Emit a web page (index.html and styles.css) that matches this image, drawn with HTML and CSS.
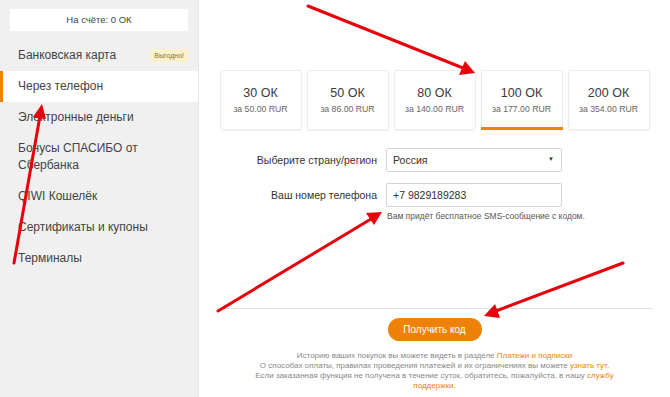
FILE: index.html
```html
<!doctype html>
<html lang="ru">
<head>
	<meta charset="UTF-8">
	<title>Покупка ОК через телефон</title>
	<link rel="stylesheet" href="styles.css">
</head>
<body>
<div class="page">
	<div class="side">
		<div class="balance">На счёте: 0 ОК</div>
		<ul class="menu">
			<li class="item">Банковская карта <span class="badge">Выгодно!</span></li>
			<li class="item active">Через телефон</li>
			<li class="item">Электронные деньги</li>
			<li class="item">Бонусы СПАСИБО от Сбербанка</li>
			<li class="item">QIWI Кошелёк</li>
			<li class="item">Сертификаты и купоны</li>
			<li class="item">Терминалы</li>
		</ul>
	</div>

	<div class="main">
		<div class="cards">
			<div class="card"><div class="amount">30 ОК</div><div class="price">за 50.00 RUR</div></div>
			<div class="card"><div class="amount">50 ОК</div><div class="price">за 86.00 RUR</div></div>
			<div class="card"><div class="amount">80 ОК</div><div class="price">за 140.00 RUR</div></div>
			<div class="card selected"><div class="amount">100 ОК</div><div class="price">за 177.00 RUR</div></div>
			<div class="card"><div class="amount">200 ОК</div><div class="price">за 354.00 RUR</div></div>
		</div>

		<form class="form">
			<div class="row">
				<label for="country">Выберите страну/регион</label>
				<div class="select">
					<select id="country" name="country">
						<option>Россия</option>
					</select>
				</div>
			</div>
			<div class="row">
				<label for="phone">Ваш номер телефона</label>
				<input type="text" id="phone" name="phone" value="+7 9829189283">
			</div>
			<div class="hint">Вам придёт бесплатное SMS-сообщение с кодом.</div>
		</form>

		<div class="divider"></div>

		<div class="submit">
			<button type="button" class="button">Получить код</button>
		</div>

		<p class="note">
			Историю ваших покупок вы можете видеть в разделе <a href="#">Платежи и подписки</a><br>
			О способах оплаты, правилах проведения платежей и их ограничениях вы можете <a href="#">узнать тут</a>.<br>
			Если заказанная функция не получена в течение суток, обратитесь, пожалуйста, в нашу <a href="#">службу поддержки</a>.
		</p>
	</div>

	<!-- стрелки поверх скриншота -->
	<svg class="arrows" width="670" height="397" viewBox="0 0 670 397">
		<g stroke="#e8000b" stroke-width="3" stroke-linecap="round">
			<line x1="308" y1="6" x2="463" y2="68"/>
			<line x1="14" y1="263" x2="40" y2="116"/>
			<line x1="218" y1="311" x2="371" y2="219"/>
			<line x1="623" y1="263" x2="496" y2="311"/>
		</g>
		<g fill="#e8000b">
			<polygon points="475,73 465,61 459,75"/>
			<polygon points="42,104 46,119 33,117"/>
			<polygon points="382,212 374,225 366,213"/>
			<polygon points="484,316 495,304 500,318"/>
		</g>
	</svg>
</div>
</body>
</html>
```

FILE: styles.css
```css
*{
	box-sizing: border-box;
}
body{
	margin: 0;
	font-family: "Liberation Sans", Arial, "Noto Sans CJK SC", sans-serif;
	color: #333;
	background: #fff;
}
.page{
	position: relative;
	display: flex;
	width: 670px;
	height: 397px;
	overflow: hidden;
}
.side{
	width: 199px;
	flex-shrink: 0;
	background: #f0f0f0;
	border-right: 1px solid #e6e6e6;
	padding-top: 9px;
}
.balance{
	margin: 0 10px;
	height: 22px;
	line-height: 22px;
	background: #fff;
	border-radius: 2px;
	text-align: center;
	font-size: 9.5px;
	color: #444;
}
.menu{
	list-style: none;
	margin: 9px 0 0;
	padding: 0;
}
.item{
	position: relative;
	padding: 7px 50px 7px 18px;
	line-height: 17px;
	font-size: 12px;
	color: #444;
}
.item .badge{
	position: absolute;
	right: 10px;
	top: 9px;
	background: #fbf1cc;
	color: #8a7430;
	font-size: 7px;
	line-height: 13px;
	padding: 0 4px;
	border-radius: 2px;
}
.item.active{
	background: #fff;
}
.item.active::before{
	content: "";
	position: absolute;
	left: 0;
	top: 0;
	bottom: 0;
	width: 3px;
	background: #ee8208;
}
.main{
	flex: 1;
	display: flex;
	flex-direction: column;
	padding-top: 70px;
}
.cards{
	display: flex;
	justify-content: center;
	gap: 5px;
}
.card{
	position: relative;
	width: 82px;
	height: 60px;
	border: 1px solid #ececec;
	border-radius: 2px;
	box-shadow: 0 1px 2px rgba(0,0,0,0.05);
	text-align: center;
	padding-top: 15px;
}
.card.selected::after{
	content: "";
	position: absolute;
	left: -1px;
	right: -1px;
	bottom: -1px;
	height: 3px;
	background: #ee8208;
}
.amount{
	font-size: 12.5px;
	line-height: 15px;
	color: #3a3a3a;
}
.price{
	margin-top: 3px;
	font-size: 8.7px;
	color: #666;
}
.form{
	margin: 18px 0 0;
}
.row{
	display: flex;
	align-items: center;
	gap: 9px;
	margin-bottom: 11px;
}
.row label{
	width: 178px;
	text-align: right;
	font-size: 10.5px;
	color: #333;
}
.select{
	position: relative;
	width: 176px;
}
.select::after{
	content: "▼";
	position: absolute;
	right: 8px;
	top: 8px;
	font-size: 6px;
	color: #333;
	pointer-events: none;
}
select,
input{
	width: 176px;
	height: 24px;
	border: 1px solid #d4d4d4;
	border-radius: 2px;
	background: #fff;
	padding: 0 6px;
	font-family: inherit;
	font-size: 10.5px;
	color: #333;
	outline: none;
}
select{
	-webkit-appearance: none;
	appearance: none;
}
.hint{
	margin: -7px 0 0 188px;
	font-size: 8.5px;
	color: #555;
}
.divider{
	margin: 87px 17px 0 18px;
	height: 1px;
	background: #e2e2e2;
}
.submit{
	display: flex;
	justify-content: center;
	margin-top: 9px;
}
.button{
	width: 94px;
	height: 23px;
	border: none;
	border-radius: 12px;
	background: #ee8208;
	color: #fff;
	font-family: inherit;
	font-size: 10px;
	cursor: pointer;
}
.note{
	width: 368px;
	margin: 10px auto 0;
	text-align: center;
	font-size: 8px;
	line-height: 10px;
	color: #888;
}
.note a{
	color: #ee8208;
	text-decoration: none;
}
.arrows{
	position: absolute;
	left: 0;
	top: 0;
	pointer-events: none;
}
```
